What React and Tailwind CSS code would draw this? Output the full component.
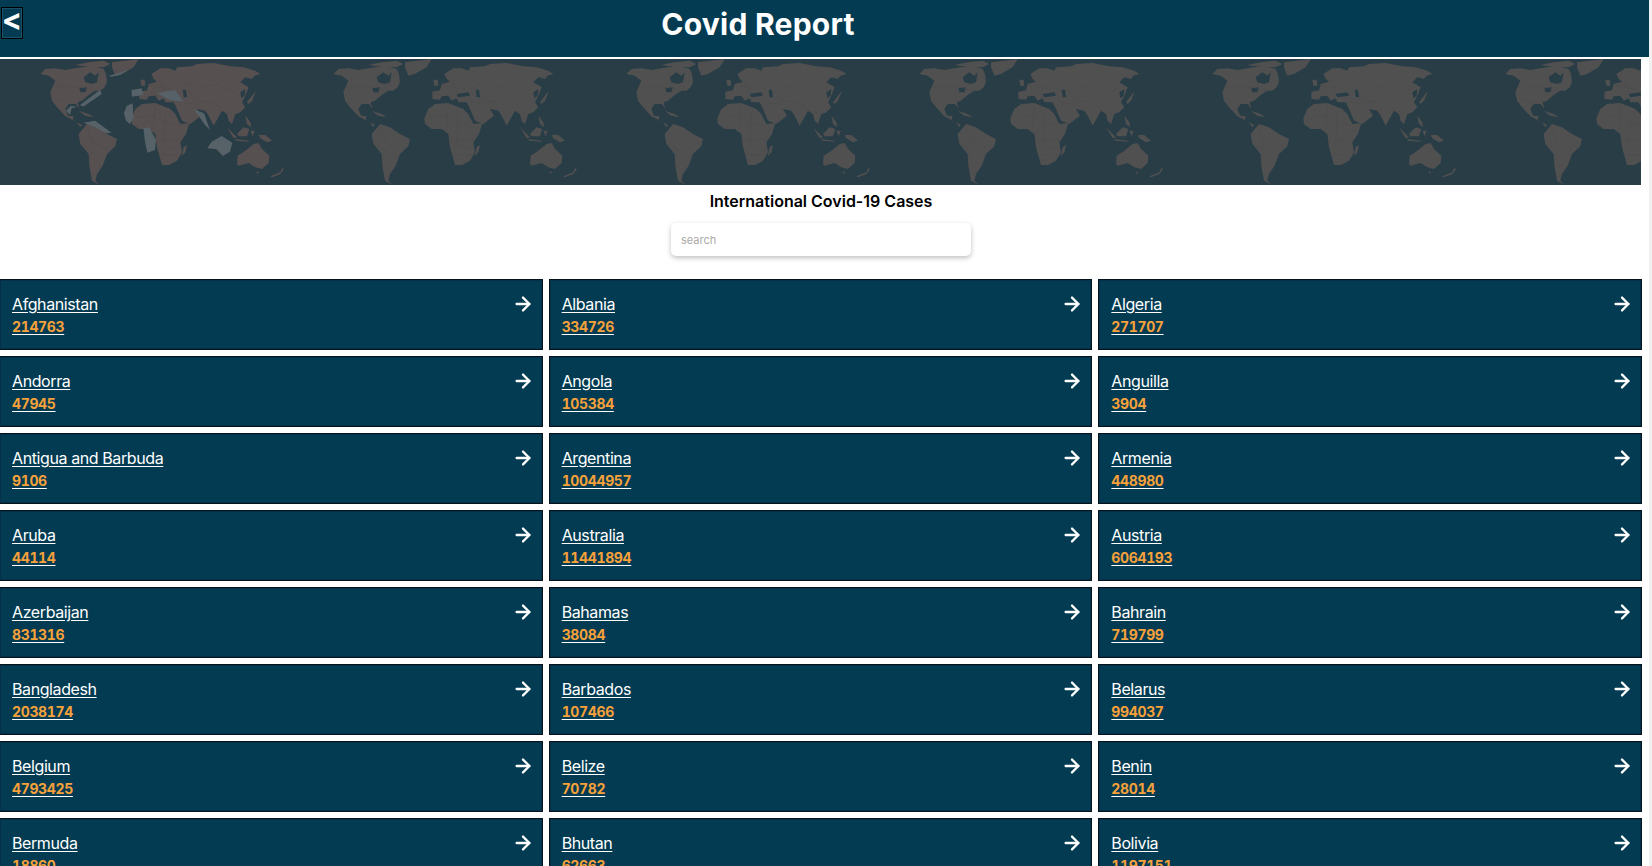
import { ArrowRight } from 'lucide-react';

const countries = [
  ['Afghanistan', 214763], ['Albania', 334726], ['Algeria', 271707],
  ['Andorra', 47945], ['Angola', 105384], ['Anguilla', 3904],
  ['Antigua and Barbuda', 9106], ['Argentina', 10044957], ['Armenia', 448980],
  ['Aruba', 44114], ['Australia', 11441894], ['Austria', 6064193],
  ['Azerbaijan', 831316], ['Bahamas', 38084], ['Bahrain', 719799],
  ['Bangladesh', 2038174], ['Barbados', 107466], ['Belarus', 994037],
  ['Belgium', 4793425], ['Belize', 70782], ['Benin', 28014],
  ['Bermuda', 18860], ['Bhutan', 62663], ['Bolivia', 1197151],
];

const land = [
  // north america
  'M25,45 L40,30 L70,28 L100,33 L130,28 L150,25 L185,22 L215,30 L222,45 L225,70 L218,85 L205,95 L190,95 L170,108 L150,125 L137,130 L142,150 L132,135 L110,135 L100,150 L108,170 L125,172 L122,182 L150,198 L145,205 L135,190 L100,172 L75,145 L60,125 L55,100 L70,65 L50,50 Z',
  // arctic islands
  'M130,18 L170,10 L215,5 L235,15 L215,25 L170,24 Z',
  // greenland
  'M240,10 L320,0 L305,25 L270,45 L250,50 L240,25 Z',
  // cuba
  'M140,155 L170,165 L185,175 L160,170 Z',
  // south america
  'M140,225 L165,195 L195,205 L225,225 L255,240 L250,262 L225,285 L212,320 L195,345 L190,365 L203,378 L180,365 L172,320 L170,285 L145,255 Z',
  // africa
  'M298,178 L310,150 L330,135 L370,132 L415,150 L430,165 L445,195 L472,192 L462,225 L445,250 L450,280 L435,305 L412,318 L390,318 L375,265 L370,225 L350,210 L320,210 L300,195 Z',
  // madagascar
  'M449,292 L455,265 L465,258 L460,280 Z',
  // uk
  'M325,62 L338,62 L340,80 L328,80 Z',
  // eurasia
  'M322,120 L322,98 L345,94 L350,75 L375,68 L365,60 L358,45 L385,28 L410,28 L430,35 L435,25 L480,22 L495,15 L545,12 L595,22 L635,25 L670,35 L685,45 L667,50 L660,60 L640,55 L625,70 L650,85 L640,110 L630,130 L640,145 L625,160 L610,165 L600,195 L590,185 L585,165 L570,155 L545,200 L530,170 L520,155 L495,150 L507,170 L475,195 L450,185 L435,150 L425,130 L400,130 L395,118 L380,125 L370,110 L350,112 L345,122 Z',
  // japan
  'M672,95 L660,125 L650,135 L645,130 L660,110 Z',
  // indonesia and philippines
  'M585,205 L615,235 L605,238 Z M610,240 L650,245 L650,248 L612,245 Z M615,225 L635,205 L652,210 L645,232 L620,232 Z M640,170 L655,190 L658,205 L645,195 Z M655,215 L668,215 L662,232 Z',
  // new guinea
  'M680,228 L700,228 L720,245 L705,250 L685,238 Z',
  // australia
  'M615,315 L617,290 L640,275 L665,255 L680,252 L690,270 L712,290 L710,312 L690,330 L670,325 L650,312 L620,320 Z',
  // tasmania
  'M672,338 L682,338 L678,345 Z',
  // new zealand
  'M715,352 L745,340 L752,325 L755,332 L745,345 L720,355 Z',
];

// inland water, on top of the land
const water = 'M155,55 L175,40 L190,50 L200,40 L195,70 L180,75 L160,70 Z M142,88 L165,85 L160,100 L145,100 Z M395,105 L430,100 L435,110 L400,115 Z M452,92 L462,92 L465,115 L455,115 Z M625,100 L640,90 L638,110 L628,118 Z';

const borders = 'M60,82 L150,85 L185,95 M70,120 L110,132 M165,205 L180,250 L225,270 M145,255 L180,270 L172,320 M310,175 L365,170 L400,190 L445,200 M370,135 L365,210 M400,160 L395,260 L440,270 M375,245 L445,240 M385,285 L440,290 M350,80 L420,90 M380,60 L395,100 M435,90 L470,70 L515,85 L555,75 L605,100 L625,85 M470,90 L490,125 L540,130 L570,150 L600,165 M440,130 L490,135 M490,125 L515,150';

// lighter patches that only show on the first map
const patches = [
  'M325,78 L385,60 L360,75 L335,80 Z',
  'M372,190 L380,168 L398,160 L400,205 L390,222 L378,212 Z',
  'M430,235 L448,232 L468,270 L465,300 L442,308 L435,275 Z',
  'M622,295 L635,275 L665,258 L697,278 L690,305 L668,318 L650,298 Z',
  'M198,182 L212,168 L232,170 L215,175 L210,195 Z',
  'M250,218 L285,212 L335,248 L318,250 L285,232 Z',
  'M395,120 L425,115 L430,135 L395,140 Z',
  'M470,130 L525,120 L550,155 L510,150 Z',
  'M240,165 L300,120 L305,132 L250,170 Z',
  'M582,178 L612,190 L630,240 L615,225 Z',
];

function WorldMap() {
  return (
    <svg width="1641" height="126" viewBox="0 0 4923 378" className="block bg-[#293d47]">
      <defs>
        <g id="world">
          {land.map((d, i) => <path key={i} d={d} />)}
          <path d={water} fill="#293d47" />
          <path d={borders} fill="none" stroke="#484848" strokeWidth="1" />
        </g>
      </defs>
      {[96, 975, 1854, 2733, 3612, 4491].map((x, i) => (
        <use key={x} href="#world" x={x} fill={i === 0 ? '#575050' : '#505050'} />
      ))}
      <g transform="translate(0,-27)">
        {patches.map((d, i) => <path key={i} d={d} fill="#566268" />)}
      </g>
    </svg>
  );
}

function CountryCard({ name, cases }) {
  return (
    <div className="relative h-[71px] border border-[#04141d] bg-[#023b52] pl-[12px] pt-[14px] shadow-[inset_0_0_0_1px_#06304a]">
      <a href="#" className="block w-fit text-base leading-[20px] tracking-[-0.4px] text-white underline underline-offset-2">{name}</a>
      <a href="#" className="mt-[3px] block w-fit text-sm font-bold tabular-nums leading-[20px] tracking-[-0.35px] text-[#f6a13a] underline decoration-white underline-offset-2">{cases}</a>
      <ArrowRight size={22} strokeWidth={2.5} className="absolute right-[8px] top-[13px] text-white" />
    </div>
  );
}

export default function App() {
  return (
    <div className="flex h-[866px] w-full overflow-hidden bg-white font-['Inter',sans-serif] text-black">
      <main className="w-[1649px] shrink-0">
        <header className="relative flex h-[59px] justify-center border-b-2 border-white bg-[#023b52] pr-[133px] pt-[5px]">
          <button className="absolute left-[1px] top-[7px] flex h-[32px] w-[22px] items-start justify-center border border-black bg-[#023b52] text-[30px] font-bold leading-[22px] text-white shadow-[inset_0_0_0_1px_#1c5068]">&lt;</button>
          <h1 className="text-3xl font-bold leading-[38px] tracking-[0.25px] text-white">Covid Report</h1>
        </header>
        <WorldMap />
        <div className="w-[1642px]">
          <h2 className="mt-[4px] text-center text-base font-semibold leading-[24px]">International Covid-19 Cases</h2>
          <div className="mt-[10px] flex justify-center">
            <input
              placeholder="search"
              className="h-[33px] w-[300px] rounded-[5px] bg-white px-[10px] text-[11px] shadow-[0_2px_5px_rgba(0,0,0,0.25)] outline-none placeholder:text-[#aaaaaa]"
            />
          </div>
          <div className="-ml-[1px] mt-[23px] grid w-[1643px] grid-cols-3 gap-[6px]">
            {countries.map(([name, cases]) => (
              <CountryCard key={name} name={name} cases={cases} />
            ))}
          </div>
        </div>
      </main>
      <div className="w-[3px] bg-[#f0f0f0]" />
    </div>
  );
}
